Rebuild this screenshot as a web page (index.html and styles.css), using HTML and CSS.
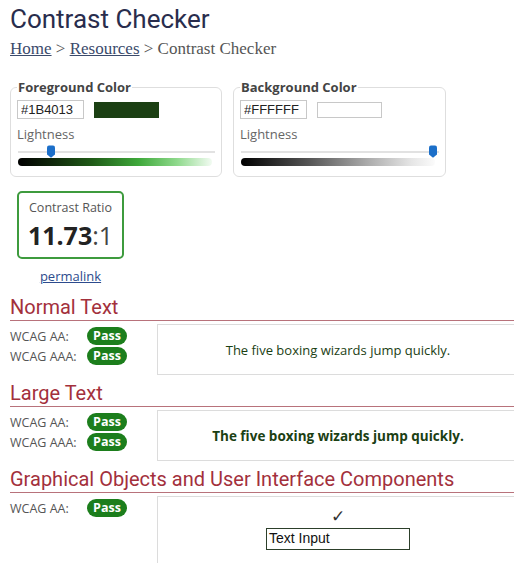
FILE: index.html
```html
<!DOCTYPE html>
<html lang="en">
<head>
<meta charset="utf-8">
<title>Contrast Checker</title>
<link rel="stylesheet" href="styles.css">
</head>
<body>
<main class="page">
  <h1 class="title">Contrast Checker</h1>
  <nav class="crumbs"><a href="#">Home</a> &gt; <a href="#">Resources</a> &gt; Contrast Checker</nav>

  <div class="pickers">
    <fieldset class="picker picker-fg">
      <legend>Foreground Color</legend>
      <div class="hex-row">
        <input class="hex" type="text" value="#1B4013">
        <span class="swatch swatch-fg"></span>
      </div>
      <div class="label">Lightness</div>
      <div class="slider">
        <div class="track"></div>
        <svg class="thumb" style="left:29px" width="10" height="13" viewBox="0 0 10 13"><path d="M1 2.5Q1 0.5 3 0.5H7Q9 0.5 9 2.5V9.5L5 12.8L1 9.5Z"/></svg>
        <div class="ramp ramp-fg"></div>
      </div>
    </fieldset>

    <fieldset class="picker picker-bg">
      <legend>Background Color</legend>
      <div class="hex-row">
        <input class="hex" type="text" value="#FFFFFF">
        <span class="swatch swatch-bg"></span>
      </div>
      <div class="label">Lightness</div>
      <div class="slider">
        <div class="track"></div>
        <svg class="thumb" style="left:188px" width="10" height="13" viewBox="0 0 10 13"><path d="M1 2.5Q1 0.5 3 0.5H7Q9 0.5 9 2.5V9.5L5 12.8L1 9.5Z"/></svg>
        <div class="ramp ramp-bg"></div>
      </div>
    </fieldset>
  </div>

  <div class="ratio-col">
    <div class="ratio">
      <div class="ratio-label">Contrast Ratio</div>
      <div class="ratio-value"><b>11.73</b>:1</div>
    </div>
    <a class="permalink" href="#">permalink</a>
  </div>

  <section class="check">
    <h2 class="check-title">Normal Text</h2>
    <div class="results">
      <div class="grades">
        <div class="grade"><span class="grade-name">WCAG AA:</span><span class="pass">Pass</span></div>
        <div class="grade"><span class="grade-name">WCAG AAA:</span><span class="pass">Pass</span></div>
      </div>
      <div class="sample sample-normal">The five boxing wizards jump quickly.</div>
    </div>
  </section>

  <section class="check">
    <h2 class="check-title">Large Text</h2>
    <div class="results">
      <div class="grades">
        <div class="grade"><span class="grade-name">WCAG AA:</span><span class="pass">Pass</span></div>
        <div class="grade"><span class="grade-name">WCAG AAA:</span><span class="pass">Pass</span></div>
      </div>
      <div class="sample sample-large">The five boxing wizards jump quickly.</div>
    </div>
  </section>

  <section class="check">
    <h2 class="check-title">Graphical Objects and User Interface Components</h2>
    <div class="results">
      <div class="grades">
        <div class="grade"><span class="grade-name">WCAG AA:</span><span class="pass">Pass</span></div>
      </div>
      <div class="sample sample-ui">
        <span class="tick">&#10003;</span>
        <span class="demo-input">Text Input</span>
      </div>
    </div>
  </section>
</main>
</body>
</html>
```

FILE: styles.css
```css
html, body {
  margin: 0;
  overflow: hidden;
  background: #fff;
}

body {
  font-family: "Open Sans", "Liberation Sans", sans-serif;
  color: #555;
}

.page {
  width: 509px;
  padding-left: 10px;
}

/* page header */
.title {
  margin: 0;
  padding-top: 4px;
  font-family: Roboto, "Liberation Sans", sans-serif;
  font-weight: 400;
  font-size: 26px;
  line-height: 30px;
  color: #292d4d;
}

.crumbs {
  margin-top: 5px;
  font-family: "Liberation Serif", serif;
  font-size: 17px;
  line-height: 20px;
  color: #555;
}

.crumbs a {
  color: #3b4a6b;
  text-decoration: underline;
}

/* colour pickers */
.pickers {
  display: flex;
  gap: 11px;
  margin-top: 20px;
}

.picker {
  box-sizing: border-box;
  min-width: 0;
  margin: 0;
  padding: 0 6px 10px 6px;
  border: 1px solid #dedede;
  border-radius: 6px;
}

.picker-fg { width: 212px; }
.picker-bg { width: 213px; }

.picker legend {
  padding: 0 1px;
  font-weight: 700;
  font-size: 13px;
  line-height: 16px;
  color: #444;
}

.hex-row {
  display: flex;
  align-items: center;
  height: 19px;
  margin-top: 5px;
}

.hex {
  box-sizing: border-box;
  width: 67px;
  height: 19px;
  margin: 0;
  padding: 0 3px;
  border: 1px solid #c8c8c8;
  border-radius: 0;
  font-family: "Liberation Sans", sans-serif;
  font-size: 13px;
  color: #222;
  outline: none;
}

.swatch {
  box-sizing: border-box;
  width: 65px;
  height: 16px;
  margin-left: 10px;
  border: 1px solid #c8c8c8;
}

.swatch-fg { background: #1b4013; border-color: #1b4013; }
.swatch-bg { background: #fff; }

.label {
  margin-top: 7px;
  font-size: 13px;
  line-height: 16px;
  color: #666;
}

.slider {
  position: relative;
  height: 21px;
  margin-top: 3px;
}

.track {
  position: absolute;
  left: 1px;
  right: 0;
  top: 6px;
  height: 2px;
  background: #e2e2e2;
}

.thumb {
  position: absolute;
  top: 0;
  fill: #1c6fc9;
}

.ramp {
  position: absolute;
  left: 1px;
  top: 13px;
  width: 194px;
  height: 8px;
  border-radius: 4px;
}

.ramp-fg {
  background: linear-gradient(to right, #000 0%, #10280b 18%, #1f5a17 38%, #3ea83a 62%, #8fd98c 82%, #f2fbf2 100%);
}

.ramp-bg {
  background: linear-gradient(to right, #000 0%, #555 35%, #aaa 65%, #e6e6e6 88%, #fbfbfb 100%);
}

/* contrast ratio */
.ratio-col {
  display: flex;
  flex-direction: column;
  align-items: center;
  width: 107px;
  margin: 14px 0 0 7px;
}

.ratio {
  box-sizing: border-box;
  width: 107px;
  height: 68px;
  padding-top: 7px;
  border: 2px solid #3e9b3e;
  border-radius: 5px;
  text-align: center;
}

.ratio-label {
  font-size: 12.5px;
  line-height: 16px;
  color: #555;
}

.ratio-value {
  margin-top: 4px;
  font-size: 25px;
  line-height: 30px;
  color: #444;
}

.ratio-value b {
  font-weight: 700;
  color: #222;
}

.permalink {
  margin-top: 9px;
  font-size: 13px;
  line-height: 16px;
  color: #2d4b8d;
  text-decoration: underline;
}

/* checks */
.check {
  margin-top: 7px;
}

.check:first-of-type {
  margin-top: 12px;
}

.check-title {
  margin: 0;
  padding-bottom: 2px;
  border-bottom: 1px solid #b8727b;
  font-family: Roboto, "Liberation Sans", sans-serif;
  font-weight: 400;
  font-size: 20px;
  line-height: 22px;
  color: #a3303c;
}

.results {
  display: flex;
  margin-top: 3px;
}

.grades {
  display: flex;
  flex-direction: column;
  gap: 2px;
  width: 147px;
  flex: none;
  padding-top: 3px;
}

.grade {
  display: flex;
  align-items: center;
  height: 18px;
}

.grade-name {
  width: 77px;
  font-size: 12.5px;
  color: #555;
}

.pass {
  width: 40px;
  height: 18px;
  border-radius: 9px;
  background: #1c7e1c;
  color: #fff;
  font-weight: 700;
  font-size: 12.5px;
  line-height: 18px;
  text-align: center;
}

.sample {
  box-sizing: border-box;
  flex: 1;
  height: 51px;
  border: 1px solid #dcdcdc;
  display: flex;
  align-items: center;
  justify-content: center;
  color: #1b4013;
}

.sample-normal {
  font-size: 13px;
}

.sample-large {
  font-size: 13.5px;
  font-weight: 700;
}

.sample-ui {
  height: 72px;
  flex-direction: column;
  justify-content: flex-start;
  padding-top: 11px;
}

.tick {
  font-family: "DejaVu Sans", sans-serif;
  font-size: 17px;
  line-height: 17px;
  color: #333;
}

.demo-input {
  box-sizing: border-box;
  width: 144px;
  height: 22px;
  margin-top: 3px;
  padding-left: 2px;
  border: 1.5px solid #2c3f2a;
  font-family: "Liberation Sans", sans-serif;
  font-size: 14px;
  line-height: 19px;
  color: #111;
}
```
